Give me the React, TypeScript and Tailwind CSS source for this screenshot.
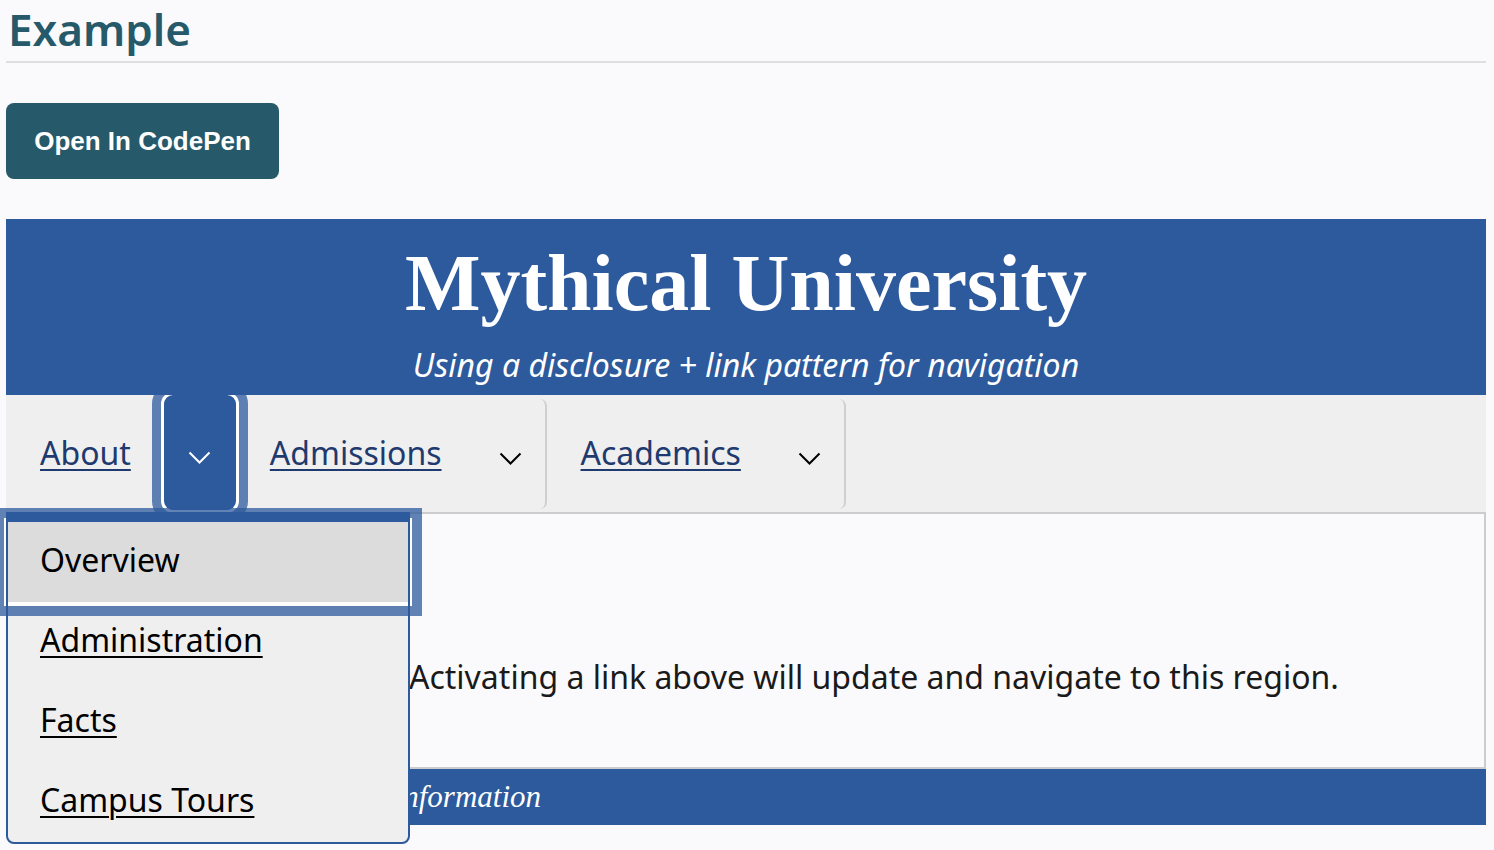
import React from "react";

type NavItem = {
  label: string;
  open?: boolean;
};

const navItems: NavItem[] = [
  { label: "About", open: true },
  { label: "Admissions" },
  { label: "Academics" },
];

const aboutLinks = ["Overview", "Administration", "Facts", "Campus Tours"];

function Chevron({ color }: { color: string }) {
  return (
    <svg width="23" height="13" viewBox="0 0 23 13" className="mt-[9px]" aria-hidden="true">
      <path d="M1.5 1.5 L11.5 11.5 L21.5 1.5" fill="none" stroke={color} strokeWidth="2" />
    </svg>
  );
}

function AboutMenu() {
  return (
    <ul className="absolute left-0 top-full z-20 w-[404px] rounded-b-[8px] bg-[#efefef] px-[2px] pt-[10px] pb-[2px]">
      {aboutLinks.map((label, i) => (
        <li key={label}>
          <a
            href="#"
            aria-current={i === 0 ? "page" : undefined}
            className={
              i === 0
                ? "flex h-[80px] items-center bg-[#dcdcdc] pb-[4px] pl-[32px] text-black no-underline shadow-[0_0_0_4px_#fff,0_0_0_14px_rgba(45,90,156,0.75)]"
                : "flex h-[80px] items-center pb-[4px] pl-[32px] text-black underline decoration-2 underline-offset-[4px]"
            }
          >
            {label}
          </a>
        </li>
      ))}
      <div className="pointer-events-none absolute inset-0 rounded-b-[8px] border-2 border-t-[10px] border-[#2d5a9c]" />
    </ul>
  );
}

export default function App() {
  return (
    <div
      className="min-h-[850px] bg-[#fafafc] pl-[6px] pr-[8px]"
      style={{ fontFamily: '"Noto Sans", "Open Sans", sans-serif' }}
    >
      <h2 className="pl-[2px] text-[44px] font-semibold leading-[58px] text-[#265a6a]">Example</h2>
      <hr className="mt-[3px] border-0 border-t-2 border-[#dedee0]" />

      <button
        type="button"
        className="mt-[40px] flex h-[76px] w-[273px] items-center justify-center rounded-[8px] bg-[#265a6a] text-[26px] font-bold text-white"
        style={{ fontFamily: '"Liberation Sans", Arial, sans-serif' }}
      >
        Open In CodePen
      </button>

      <header className="relative z-30 mt-[40px] h-[176px] bg-[#2d5a9c] pt-[18px] text-center text-white">
        <h1
          className="text-[80px] font-bold leading-[92px]"
          style={{ fontFamily: '"Liberation Serif", "Times New Roman", serif' }}
        >
          Mythical University
        </h1>
        <p className="mt-[15px] text-[32px] italic leading-[42px]">
          Using a disclosure + link pattern for navigation
        </p>
      </header>

      <nav className="h-[117px] bg-[#efefef]">
        <ul className="flex h-full text-[32px]">
          {navItems.map((item) => (
            <li key={item.label} className="relative flex h-full items-center">
              <a
                href="#"
                className="pb-[2px] pl-[34px] pr-[33px] text-[#1e3a6e] underline decoration-2 underline-offset-[4px]"
              >
                {item.label}
              </a>
              {item.open ? (
                <button
                  type="button"
                  aria-expanded="true"
                  className="relative z-10 flex h-[115px] w-[72px] items-center justify-center self-start rounded-[9px] bg-[#2d5a9c] shadow-[0_0_0_3px_#fff,0_0_0_12px_rgba(45,90,156,0.75)]"
                >
                  <Chevron color="#fff" />
                </button>
              ) : (
                <button
                  type="button"
                  aria-expanded="false"
                  className="flex h-full w-[72px] items-center justify-center"
                >
                  <Chevron color="#000" />
                </button>
              )}
              <span className="-ml-[8px] h-[110px] w-[8px] rounded-r-[7px] border-r-2 border-[#cfcfcf]" />
              {item.open && <AboutMenu />}
            </li>
          ))}
        </ul>
      </nav>

      <main className="h-[257px] border-2 border-[#cccccc] pl-[401px] pt-[139px]">
        <p className="text-[32px] text-[#1a1a1a]">
          Activating a link above will update and navigate to this region.
        </p>
      </main>

      <footer
        className="flex h-[56px] items-center bg-[#2d5a9c] pl-[40px] text-[31px] italic text-white"
        style={{ fontFamily: '"Liberation Serif", "Times New Roman", serif' }}
      >
        Mythical University Footer Information
      </footer>
    </div>
  );
}
